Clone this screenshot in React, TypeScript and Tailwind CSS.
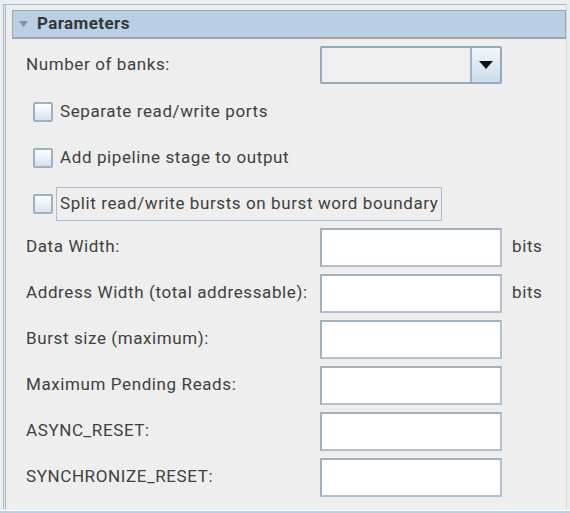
const CHECKS = [
  { label: 'Separate read/write ports', focused: false },
  { label: 'Add pipeline stage to output', focused: false },
  { label: 'Split read/write bursts on burst word boundary', focused: true },
]

const FIELDS = [
  { label: 'Data Width:', unit: 'bits' },
  { label: 'Address Width (total addressable):', unit: 'bits' },
  { label: 'Burst size (maximum):', unit: '' },
  { label: 'Maximum Pending Reads:', unit: '' },
  { label: 'ASYNC_RESET:', unit: '' },
  { label: 'SYNCHRONIZE_RESET:', unit: '' },
]

function CheckBox() {
  return (
    <span className="block w-[20px] h-[20px] rounded-[2px] border-2 border-[#9fb0c2] bg-gradient-to-b from-[#ffffff] to-[#d6e2ef]" />
  )
}

export default function App() {
  return (
    <div
      className="w-[570px] h-[513px] overflow-hidden bg-[#e9eef3] text-[#404040]"
      style={{ fontFamily: 'Roboto, "Noto Sans", sans-serif' }}
    >
      <div className="ml-[3px] mt-[4px] w-[564px] h-[505px] border-l-[3px] border-double border-t border-r border-[#a7b7c8] bg-[#eeeeee] border-r-[#d8d8d8]">
        {/* Section header */}
        <div className="ml-[6px] mt-[5px] h-[29px] border border-[#a3a3a3] border-b-2 bg-[#b9cfe6] flex items-center">
          <svg width="9" height="6" viewBox="0 0 9 6" className="ml-[6px]" aria-hidden="true">
            <path d="M0 0h9L4.5 6z" fill="#8a8f96" />
          </svg>
          <span className="ml-[9px] text-[17px] font-bold tracking-[0.4px] text-[#363636]">Parameters</span>
        </div>

        <div className="pl-[20px] pt-[3px] text-[17px] tracking-[0.6px]">
          {/* Number of banks */}
          <div className="h-[46px] flex items-center">
            <span className="w-[294px]">Number of banks:</span>
            <div className="w-[182px] h-[38px] flex rounded-[2px] border-2 border-[#95a9bf] bg-[#efefef]">
              <div className="flex-1" />
              <div className="w-[30px] border-l-2 border-[#9fb2c6] bg-gradient-to-b from-[#f3f6fa] to-[#cbdbeb] flex items-center justify-center">
                <svg width="14" height="8" viewBox="0 0 14 8" aria-hidden="true">
                  <path d="M0 0h14L7 8z" fill="#111" />
                </svg>
              </div>
            </div>
          </div>

          {/* Checkboxes */}
          <div className="mt-[1px]">
            {CHECKS.map((c) => (
              <div key={c.label} className="h-[46px] flex items-center pl-[7px]">
                <CheckBox />
                <span
                  className={`ml-[3px] px-[3px] py-[3px] border ${c.focused ? 'border-[#a6bdd6]' : 'border-transparent'}`}
                >
                  {c.label}
                </span>
              </div>
            ))}
          </div>

          {/* Text fields */}
          <div className="-mt-[3px]">
            {FIELDS.map((f) => (
              <div key={f.label} className="h-[46px] flex items-center">
                <span className="w-[294px]">{f.label}</span>
                <div className="w-[182px] h-[39px] bg-white border-2 border-[#b3bfcc] border-t-[#a3b0be] border-l-[#a3b0be]" />
                {f.unit && <span className="ml-[10px]">{f.unit}</span>}
              </div>
            ))}
          </div>
        </div>
      </div>
      <div className="mt-[1px] h-[1px] bg-white" />
      <div className="h-[3px] bg-[#b9cfe6]" />
    </div>
  )
}
